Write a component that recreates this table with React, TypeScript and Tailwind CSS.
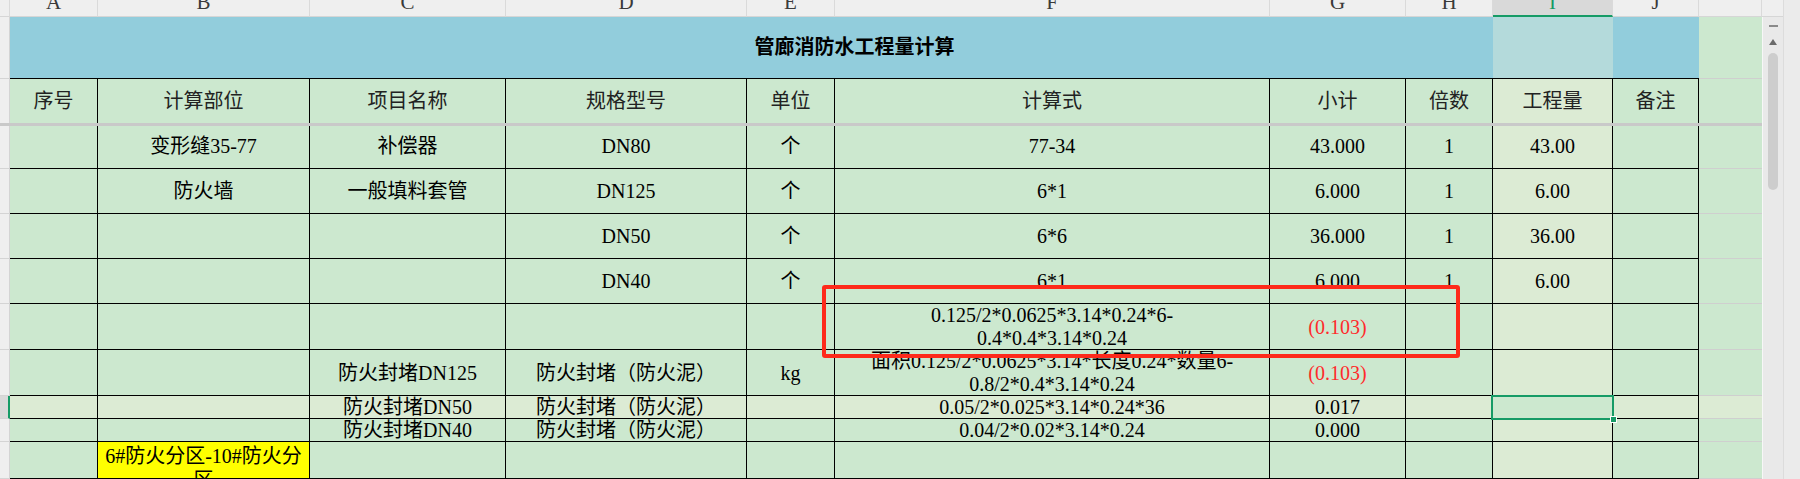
import React from 'react'

// column widths: row header, A..J, K (partial)
const W = [
  'w-[10px]',
  'w-[88px]',
  'w-[212px]',
  'w-[196px]',
  'w-[241px]',
  'w-[88px]',
  'w-[435px]',
  'w-[136px]',
  'w-[87px]',
  'w-[120px]',
  'w-[86px]',
  'w-[63px]',
]

const LETTERS = ['', 'A', 'B', 'C', 'D', 'E', 'F', 'G', 'H', 'I', 'J', '']

const GREEN = 'bg-[#cce8cf]'
const LIGHT = 'bg-[#dcebd4]'

type Row = {
  h: string
  cells: React.ReactNode[]
  active?: boolean
  yellowB?: boolean
}

const red = (t: string) => <span className="text-[#ff2b2b]">{t}</span>

const rows: Row[] = [
  { h: 'h-[45px]', cells: ['', '变形缝35-77', '补偿器', 'DN80', '个', '77-34', '43.000', '1', '43.00', ''] },
  { h: 'h-[45px]', cells: ['', '防火墙', '一般填料套管', 'DN125', '个', '6*1', '6.000', '1', '6.00', ''] },
  { h: 'h-[45px]', cells: ['', '', '', 'DN50', '个', '6*6', '36.000', '1', '36.00', ''] },
  { h: 'h-[45px]', cells: ['', '', '', 'DN40', '个', '6*1', '6.000', '1', '6.00', ''] },
  {
    h: 'h-[46px]',
    cells: [
      '',
      '',
      '',
      '',
      '',
      <span className="leading-[23px]">
        0.125/2*0.0625*3.14*0.24*6-
        <br />
        0.4*0.4*3.14*0.24
      </span>,
      red('(0.103)'),
      '',
      '',
      '',
    ],
  },
  {
    h: 'h-[46px]',
    cells: [
      '',
      '',
      '防火封堵DN125',
      '防火封堵（防火泥）',
      'kg',
      <span className="leading-[23px]">
        面积0.125/2*0.0625*3.14*长度0.24*数量6-
        <br />
        0.8/2*0.4*3.14*0.24
      </span>,
      red('(0.103)'),
      '',
      '',
      '',
    ],
  },
  {
    h: 'h-[23px]',
    active: true,
    cells: ['', '', '防火封堵DN50', '防火封堵（防火泥）', '', '0.05/2*0.025*3.14*0.24*36', '0.017', '', '', ''],
  },
  {
    h: 'h-[23px]',
    cells: ['', '', '防火封堵DN40', '防火封堵（防火泥）', '', '0.04/2*0.02*3.14*0.24', '0.000', '', '', ''],
  },
  { h: 'h-[37px]', yellowB: true, cells: ['', '', '', '', '', '', '', '', '', ''] },
]

function DataRow({ row }: { row: Row }) {
  return (
    <div className={`flex shrink-0 ${row.h}`}>
      <div
        className={`${W[0]} shrink-0 border-b border-[#d4d4d4] ${
          row.active ? 'bg-[#d9d9d9] border-r-2 border-r-[#169b66]' : 'bg-[#efefef] border-r border-r-[#d4d4d4]'
        }`}
      />
      {row.cells.map((c, i) => {
        const col = i + 1
        let bg = row.active || col === 9 ? LIGHT : GREEN
        if (row.active && col === 9) bg = GREEN
        if (row.yellowB && col === 2) bg = 'bg-[#ffff00]'
        return (
          <div
            key={i}
            className={`${W[col]} shrink-0 ${bg} border-r border-b border-black flex ${
              row.yellowB && col === 2 ? 'items-start pt-[2px] overflow-hidden' : 'items-center'
            } justify-center text-center whitespace-nowrap`}
          >
            {row.yellowB && col === 2 ? (
              <span className="leading-[24px]">
                6#防火分区-10#防火分
                <br />区
              </span>
            ) : (
              c
            )}
          </div>
        )
      })}
      <div className={`${W[11]} shrink-0 border-b border-[#cfcfcf] ${row.active ? LIGHT : GREEN}`} />
    </div>
  )
}

export default function App() {
  return (
    <div className="relative flex w-[1800px] h-[479px] overflow-hidden bg-[#efefef] text-[20px] text-black font-['Liberation_Serif','Noto_Sans_CJK_SC',serif]">
      {/* sheet */}
      <div className="flex flex-col w-[1762px] shrink-0">
        {/* column letters */}
        <div className="flex h-[17px] shrink-0">
          {LETTERS.map((l, i) => (
            <div
              key={i}
              className={`${W[i]} shrink-0 overflow-hidden flex justify-center items-start border-r border-r-[#dadada] ${
                l === 'I'
                  ? 'bg-[#d9d9d9] border-b-2 border-b-[#169b66] text-[#169b66]'
                  : 'bg-[#efefef] border-b border-b-[#d6d6d6] text-[#3a3a3a]'
              }`}
            >
              <span className="block text-[21px] leading-[21px] -mt-[8px]">{l}</span>
            </div>
          ))}
        </div>

        {/* title row */}
        <div className="flex h-[62px] shrink-0">
          <div className={`${W[0]} shrink-0 bg-[#efefef] border-r border-b border-[#d4d4d4]`} />
          <div className="relative w-[1689px] shrink-0 bg-[#92cddc] border-b border-black flex items-center justify-center">
            <div className="absolute left-[1483px] top-0 bottom-0 w-[120px] bg-[#b4dadb]" />
            <span className="relative font-bold -mt-[2px]">管廊消防水工程量计算</span>
          </div>
          <div className={`${W[11]} shrink-0 ${GREEN} border-b border-[#cfcfcf]`} />
        </div>

        {/* header row */}
        <div className="flex h-[45px] shrink-0">
          <div className={`${W[0]} shrink-0 bg-[#efefef] border-r border-b border-[#d4d4d4]`} />
          {['序号', '计算部位', '项目名称', '规格型号', '单位', '计算式', '小计', '倍数', '工程量', '备注'].map((t, i) => (
            <div
              key={t}
              className={`${W[i + 1]} shrink-0 ${i === 8 ? LIGHT : GREEN} border-r border-b border-black flex items-center justify-center text-[#222]`}
            >
              {t}
            </div>
          ))}
          <div className={`${W[11]} shrink-0 ${GREEN} border-b border-[#cfcfcf]`} />
        </div>

        {rows.map((r, i) => (
          <DataRow key={i} row={r} />
        ))}
      </div>

      {/* vertical scrollbar */}
      <div className="flex flex-col w-[21px] shrink-0">
        <div className="h-[17px] shrink-0 bg-[#efefef] border-b border-[#d6d6d6]" />
        <div className="flex-1 bg-[#e9e9e9] border-l border-[#f7f7f7] flex flex-col items-center">
          <div className="mt-[8px] w-[9px] h-[2px] bg-[#8a8a8a]" />
          <div className="mt-[12px] w-0 h-0 border-l-[4px] border-r-[4px] border-b-[6px] border-l-transparent border-r-transparent border-b-[#6b6b6b]" />
          <div className="mt-[8px] w-[10px] h-[137px] rounded-full bg-[#cdcdcd]" />
        </div>
      </div>
      <div className="w-[17px] shrink-0 bg-[#ebebeb] border-l border-[#dcdcdc]" />

      {/* frozen pane divider */}
      <div className="absolute left-0 top-[123px] w-[1762px] h-[3px] bg-[#c9c9c9]" />

      {/* active cell I (row 7) */}
      <div className="absolute left-[1491px] top-[395px] w-[123px] h-[25px] border-2 border-[#169b66]" />
      <div className="absolute left-[1610px] top-[416px] w-[7px] h-[7px] bg-[#169b66] border border-white" />

      {/* red annotation box */}
      <div className="absolute left-[822px] top-[285px] w-[638px] h-[73px] border-4 border-[#fe2a1b] rounded-[3px]" />
    </div>
  )
}
